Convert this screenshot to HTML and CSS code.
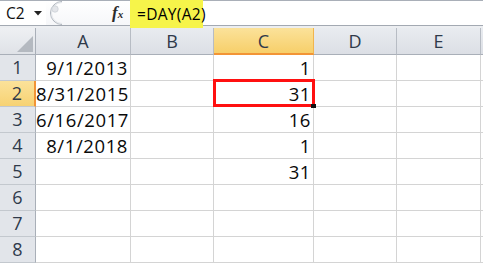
FILE: index.html
```html
<!DOCTYPE html>
<html>
<head>
<meta charset="utf-8">
<link rel="stylesheet" href="styles.css">
</head>
<body>
<div class="app">
  <div class="fbar">
    <div class="namebox">
      <span class="nb-text">C2</span>
      <svg class="nb-arrow" width="8" height="5" viewBox="0 0 8 5"><polygon points="0,0 8,0 4,4.5" fill="#222"/></svg>
    </div>
    <div class="fbtns">
      <svg class="grip" width="18" height="24" viewBox="0 0 18 24">
        <path d="M16 0.5 A 11.5 11.5 0 0 0 16 23.5" fill="none" stroke="#aeb4bc" stroke-width="1"/>
        <path d="M16 1.5 A 10.5 10.5 0 0 0 16 22.5" fill="none" stroke="#e4e7eb" stroke-width="1"/>
        <circle cx="9" cy="8" r="3.2" fill="#e3e5e9" stroke="#cbd0d6" stroke-width="0.8"/>
      </svg>
      <span class="fx">f<span class="fx-x">x</span></span>
    </div>
    <div class="fedit">
      <span class="fhl">=DAY(A2)</span>
    </div>
  </div>
  <div class="fsep"></div>
  <div class="grid">
    <div class="corner"><svg width="16" height="16" viewBox="0 0 16 16"><polygon points="16,0 16,16 0,16" fill="#b4b9c0"/></svg></div>
    <div class="ch">A</div>
    <div class="ch">B</div>
    <div class="ch ch-sel">C</div>
    <div class="ch">D</div>
    <div class="ch">E</div>
    <div class="ch ch-last"></div>

    <div class="rh">1</div><div class="c num">9/1/2013</div><div class="c"></div><div class="c num">1</div><div class="c"></div><div class="c"></div><div class="c"></div>
    <div class="rh rh-sel">2</div><div class="c num">8/31/2015</div><div class="c"></div><div class="c num active">31<span class="handle"></span></div><div class="c"></div><div class="c"></div><div class="c"></div>
    <div class="rh">3</div><div class="c num">6/16/2017</div><div class="c"></div><div class="c num">16</div><div class="c"></div><div class="c"></div><div class="c"></div>
    <div class="rh">4</div><div class="c num">8/1/2018</div><div class="c"></div><div class="c num">1</div><div class="c"></div><div class="c"></div><div class="c"></div>
    <div class="rh">5</div><div class="c num"></div><div class="c"></div><div class="c num">31</div><div class="c"></div><div class="c"></div><div class="c"></div>
    <div class="rh">6</div><div class="c"></div><div class="c"></div><div class="c"></div><div class="c"></div><div class="c"></div><div class="c"></div>
    <div class="rh">7</div><div class="c"></div><div class="c"></div><div class="c"></div><div class="c"></div><div class="c"></div><div class="c"></div>
    <div class="rh">8</div><div class="c"></div><div class="c"></div><div class="c"></div><div class="c"></div><div class="c"></div><div class="c"></div>
  </div>
</div>
</body>
</html>
```
FILE: styles.css
```css
* { box-sizing: border-box; }
html, body { margin: 0; padding: 0; background: #fff; }
body { width: 483px; height: 266px; overflow: hidden; font-family: "Open Sans", "Liberation Sans", sans-serif; color: #000; }
.app { width: 483px; }

.fbar {
  height: 26px;
  display: flex;
  border-top: 1px solid #a9afb8;
  border-bottom: 1px solid #a3a9b2;
  background: #fff;
}
.namebox {
  width: 46px;
  display: flex;
  align-items: center;
  padding-left: 6px;
  gap: 9px;
}
.nb-text { font-size: 15.5px; line-height: 24px; color: #111; }
.nb-arrow { margin-top: 1px; }
.fbtns {
  width: 84px;
  display: flex;
  align-items: center;
  background: linear-gradient(#ffffff, #f6f7f9);
}
.grip { flex: none; }
.fx {
  margin-left: 48px;
  font-family: "Liberation Serif", serif;
  font-style: italic;
  font-weight: bold;
  font-size: 17px;
  color: #2b2b2b;
  line-height: 20px;
}
.fx-x { font-size: 11px; }
.fedit {
  flex: 1;
  display: flex;
  align-items: stretch;
}
.fhl {
  width: 73px;
  margin-top: -1px;
  margin-bottom: -3px;
  padding-left: 7px;
  background: #f6f44a;
  font-size: 15.5px;
  letter-spacing: 0.3px;
  line-height: 26px;
  padding-top: 1px;
  color: #000;
  position: relative;
  z-index: 2;
}
.fsep { height: 2px; background: #eceef1; }

.grid {
  display: grid;
  grid-template-columns: 36px 95px 83px 100px 83px 84px 2px;
  grid-template-rows: 27px repeat(8, 26px);
}
.corner {
  background: linear-gradient(#eef0f3, #dfe2e7);
  border-right: 1px solid #a9afb8;
  border-bottom: 1px solid #a9afb8;
  display: flex;
  align-items: flex-end;
  justify-content: flex-end;
  padding: 0 2px 2px 0;
}
.ch {
  background: linear-gradient(#e9ecf0, #dcdfe5);
  border-right: 1px solid #b7bcc4;
  border-bottom: 1px solid #a9afb8;
  text-align: center;
  font-size: 18px;
  line-height: 26px;
  color: #2f3a4a;
}
.ch-sel {
  background: linear-gradient(#fbe29a, #f7cf6a);
  border-right: 1px solid #f1b54e;
  border-bottom: 2px solid #f29436;
}
.ch-last { border-right: none; }
.rh {
  background: #e2e5ea;
  border-right: 1px solid #a9afb8;
  border-bottom: 1px solid #c3c8ce;
  text-align: center;
  font-size: 18px;
  line-height: 25px;
  color: #2f3a4a;
}
.rh-sel {
  background: linear-gradient(#fbe29a, #f7d273);
  border-right: 2px solid #f29436;
}
.c {
  border-right: 1px solid #d4d4d4;
  border-bottom: 1px solid #d4d4d4;
  font-size: 18.5px;
  letter-spacing: 0.6px;
  line-height: 24px;
  padding-top: 1px;
  padding-right: 2px;
  text-align: right;
  position: relative;
  color: #0a0a0a;
}
.active { z-index: 3; }
.active::before {
  content: "";
  position: absolute;
  left: -1px;
  top: -2px;
  right: -2px;
  bottom: -1px;
  border: 3px solid #ff1010;
}
.handle {
  position: absolute;
  right: -3px;
  bottom: -2px;
  width: 5px;
  height: 4px;
  background: #111;
}
```
